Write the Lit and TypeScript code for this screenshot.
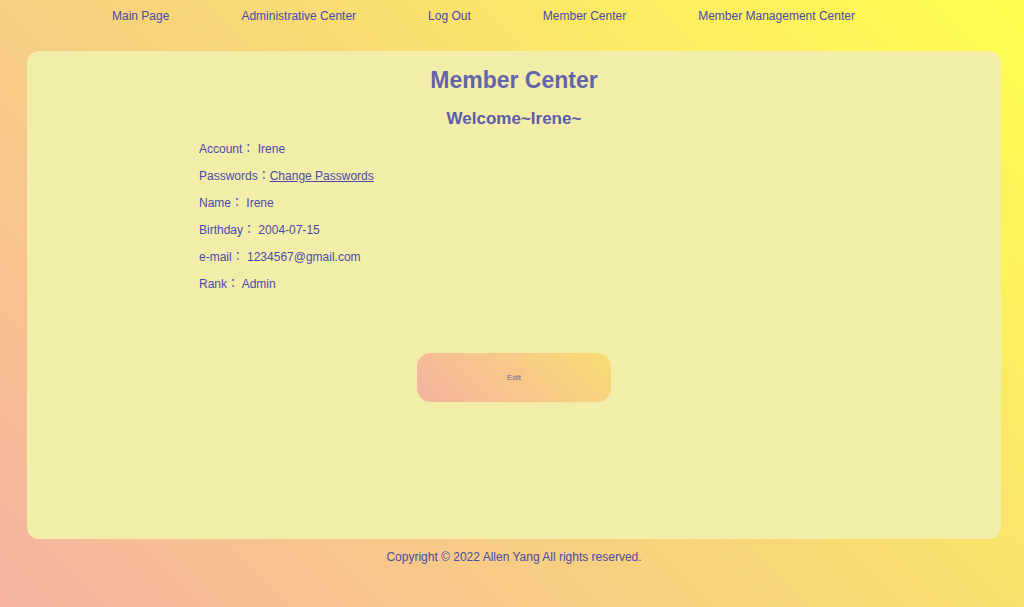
import { LitElement, html, css } from "lit";
import { customElement } from "lit/decorators.js";

@customElement("app-root")
export class AppRoot extends LitElement {
  static styles = css`
    :host {
      display: block;
      --ink: #4a4aa8;
      color: var(--ink);
      font: 12px/14px "Liberation Sans", Arial, "Noto Sans CJK TC", sans-serif;
    }
    .page {
      box-sizing: border-box;
      min-height: 100vh;
      display: flex;
      flex-direction: column;
      padding: 0 23px 0 27px;
      background: linear-gradient(45deg, #f5b3a1, #f9dc73 56%, #ffff4f);
    }
    a {
      color: inherit;
    }
    .menu {
      display: flex;
      flex-wrap: wrap;
      gap: 12px 72px;
      margin: 0;
      padding: 9px 0 28px 85px;
      list-style: none;
    }
    .menu a {
      text-decoration: none;
    }
    .panel {
      flex: 1;
      display: flex;
      flex-direction: column;
      align-items: center;
      border-radius: 12px;
      background: #f3edaa;
    }
    h1 {
      margin: 15px 0 0;
      font-size: 23px;
      line-height: 28px;
      color: #6464aa;
    }
    h2 {
      margin: 15px 0 0;
      font-size: 17px;
      line-height: 20px;
      color: #5c5ca9;
    }
    .details {
      box-sizing: border-box;
      width: 100%;
      margin: 13px 0 0;
      padding: 0 172px;
      display: grid;
      gap: 13px;
    }
    .row {
      display: flex;
    }
    dt,
    dd {
      margin: 0;
      white-space: pre;
    }
    .edit {
      width: 20%;
      height: 49px;
      margin: 62px 0 0;
      border: 0;
      border-radius: 14px;
      color: #6f62a0;
      font: 8px/10px "Liberation Sans", Arial, sans-serif;
      background: linear-gradient(45deg, #f5b3a1, #f9dc73);
      cursor: pointer;
    }
    footer {
      padding: 11px 0 43px;
      text-align: center;
    }
  `;

  private links = [
    "Main Page",
    "Administrative Center",
    "Log Out",
    "Member Center",
    "Member Management Center",
  ];

  render() {
    return html`
      <div class="page">
        <nav>
          <ul class="menu">
            ${this.links.map((text) => html`<li><a href="#">${text}</a></li>`)}
          </ul>
        </nav>
        <main class="panel">
          <h1>Member Center</h1>
          <h2>Welcome~Irene~</h2>
          <dl class="details">
            <div class="row"><dt>Account：</dt><dd> Irene</dd></div>
            <div class="row"><dt>Passwords：</dt><dd><a href="#">Change Passwords</a></dd></div>
            <div class="row"><dt>Name：</dt><dd> Irene</dd></div>
            <div class="row"><dt>Birthday：</dt><dd> 2004-07-15</dd></div>
            <div class="row"><dt>e-mail：</dt><dd> 1234567@gmail.com</dd></div>
            <div class="row"><dt>Rank：</dt><dd> Admin</dd></div>
          </dl>
          <button class="edit" type="button">Edit</button>
        </main>
        <footer>Copyright © 2022 Allen Yang All rights reserved.</footer>
      </div>
    `;
  }
}
